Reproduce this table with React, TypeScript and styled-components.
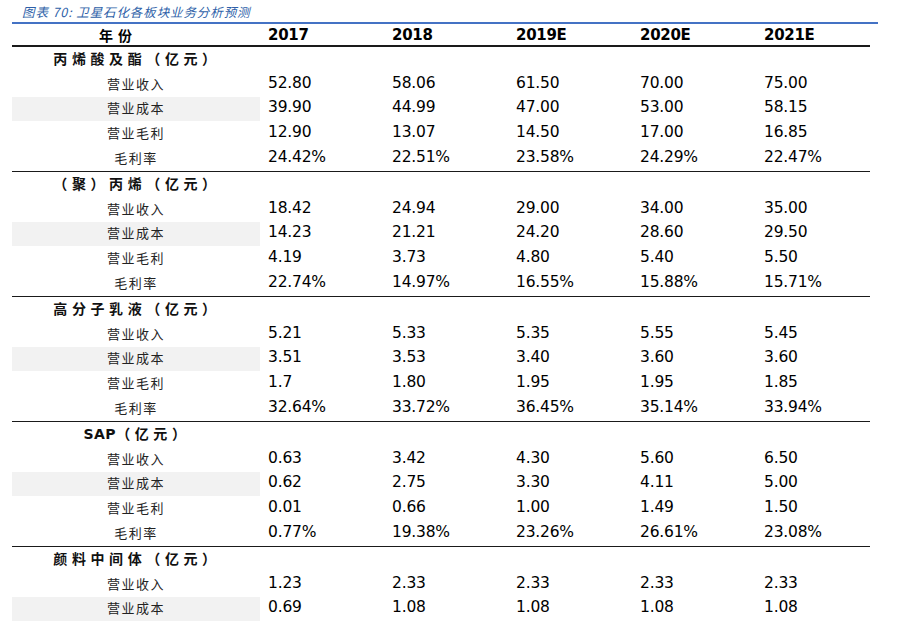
import React from "react";
import styled, { createGlobalStyle } from "styled-components";

const Global = createGlobalStyle`
  html, body { margin: 0; padding: 0; background: #fff; }
  body { font-family: "DejaVu Sans", Verdana, sans-serif; color: #000; }
`;

const Page = styled.div`
  width: 898px;
  height: 640px;
  overflow: hidden;
  padding: 0 0 0 12px;
  box-sizing: border-box;
`;

const Title = styled.div`
  height: 22px;
  padding-left: 10px;
  display: flex;
  align-items: center;
  font-family: "Noto Sans CJK SC", sans-serif;
  font-style: italic;
  font-size: 12.5px;
  letter-spacing: 0.9px;
  color: #2e5fa8;
  border-bottom: 2px solid #4472c4;
  width: 856px;
`;

const Table = styled.div`
  width: 858px;
  display: flex;
  flex-direction: column;
`;

const HeaderRow = styled.div`
  display: grid;
  grid-template-columns: 248px repeat(5, 124px);
  height: 21px;
  align-items: center;
  border-bottom: 2px solid #1a1a1a;
`;

const HeadLabel = styled.div`
  display: flex;
  justify-content: center;
  padding-right: 36px;
  font-family: "Noto Sans CJK SC", sans-serif;
  font-weight: 700;
  font-size: 14px;
  letter-spacing: 5px;
  white-space: nowrap;
`;

const HeadYear = styled.div`
  padding-left: 8px;
  font-family: "DejaVu Sans", sans-serif;
  font-weight: 700;
  font-size: 15px;
  letter-spacing: -0.3px;
`;

const Section = styled.div<{ $last?: boolean }>`
  display: flex;
  flex-direction: column;
  border-bottom: ${(p) => (p.$last ? "none" : "1px solid #1a1a1a")};
`;

const Row = styled.div`
  display: grid;
  grid-template-columns: 248px repeat(5, 124px);
  height: 24.8px;
  align-items: center;
`;

const SectionTitle = styled.div`
  text-align: center;
  font-family: "Noto Sans CJK SC", sans-serif;
  font-weight: 700;
  font-size: 14px;
  letter-spacing: 4.6px;
  color: #111;
  padding-left: 2px;
  padding-bottom: 2px;
  white-space: nowrap;
`;

const SapText = styled.span`
  font-family: "DejaVu Sans", sans-serif;
  font-weight: 700;
  font-size: 14px;
  letter-spacing: 0.5px;
`;

const Label = styled.div<{ $shade?: boolean }>`
  height: 100%;
  display: flex;
  align-items: center;
  justify-content: center;
  padding-bottom: 2px;
  box-sizing: border-box;
  font-family: "Noto Sans CJK SC", sans-serif;
  font-size: 13px;
  letter-spacing: 1.5px;
  color: #222;
  background: ${(p) => (p.$shade ? "#f2f2f2" : "transparent")};
`;

const Num = styled.div`
  padding-left: 8px;
  padding-bottom: 3px;
  font-family: "DejaVu Sans", sans-serif;
  font-size: 15.5px;
  letter-spacing: -0.2px;
  color: #000;
`;

type Sec = { title: React.ReactNode; rows: [string, string[]][] };

const sections: Sec[] = [
  {
    title: "丙烯酸及酯（亿元）",
    rows: [
      ["营业收入", ["52.80", "58.06", "61.50", "70.00", "75.00"]],
      ["营业成本", ["39.90", "44.99", "47.00", "53.00", "58.15"]],
      ["营业毛利", ["12.90", "13.07", "14.50", "17.00", "16.85"]],
      ["毛利率", ["24.42%", "22.51%", "23.58%", "24.29%", "22.47%"]],
    ],
  },
  {
    title: "（聚）丙烯（亿元）",
    rows: [
      ["营业收入", ["18.42", "24.94", "29.00", "34.00", "35.00"]],
      ["营业成本", ["14.23", "21.21", "24.20", "28.60", "29.50"]],
      ["营业毛利", ["4.19", "3.73", "4.80", "5.40", "5.50"]],
      ["毛利率", ["22.74%", "14.97%", "16.55%", "15.88%", "15.71%"]],
    ],
  },
  {
    title: "高分子乳液（亿元）",
    rows: [
      ["营业收入", ["5.21", "5.33", "5.35", "5.55", "5.45"]],
      ["营业成本", ["3.51", "3.53", "3.40", "3.60", "3.60"]],
      ["营业毛利", ["1.7", "1.80", "1.95", "1.95", "1.85"]],
      ["毛利率", ["32.64%", "33.72%", "36.45%", "35.14%", "33.94%"]],
    ],
  },
  {
    title: (
      <>
        <SapText>SAP</SapText>（亿元）
      </>
    ),
    rows: [
      ["营业收入", ["0.63", "3.42", "4.30", "5.60", "6.50"]],
      ["营业成本", ["0.62", "2.75", "3.30", "4.11", "5.00"]],
      ["营业毛利", ["0.01", "0.66", "1.00", "1.49", "1.50"]],
      ["毛利率", ["0.77%", "19.38%", "23.26%", "26.61%", "23.08%"]],
    ],
  },
  {
    title: "颜料中间体（亿元）",
    rows: [
      ["营业收入", ["1.23", "2.33", "2.33", "2.33", "2.33"]],
      ["营业成本", ["0.69", "1.08", "1.08", "1.08", "1.08"]],
    ],
  },
];

const years = ["2017", "2018", "2019E", "2020E", "2021E"];

export default function App() {
  return (
    <>
      <Global />
      <Page>
        <Title>图表 70: 卫星石化各板块业务分析预测</Title>
        <Table>
          <HeaderRow>
            <HeadLabel>年份</HeadLabel>
            {years.map((y) => (
              <HeadYear key={y}>{y}</HeadYear>
            ))}
          </HeaderRow>
          {sections.map((s, i) => (
            <Section key={i} $last={i === sections.length - 1}>
              <Row>
                <SectionTitle>{s.title}</SectionTitle>
              </Row>
              {s.rows.map(([label, vals]) => (
                <Row key={label}>
                  <Label $shade={label === "营业成本"}>{label}</Label>
                  {vals.map((v, j) => (
                    <Num key={j}>{v}</Num>
                  ))}
                </Row>
              ))}
            </Section>
          ))}
        </Table>
      </Page>
    </>
  );
}
